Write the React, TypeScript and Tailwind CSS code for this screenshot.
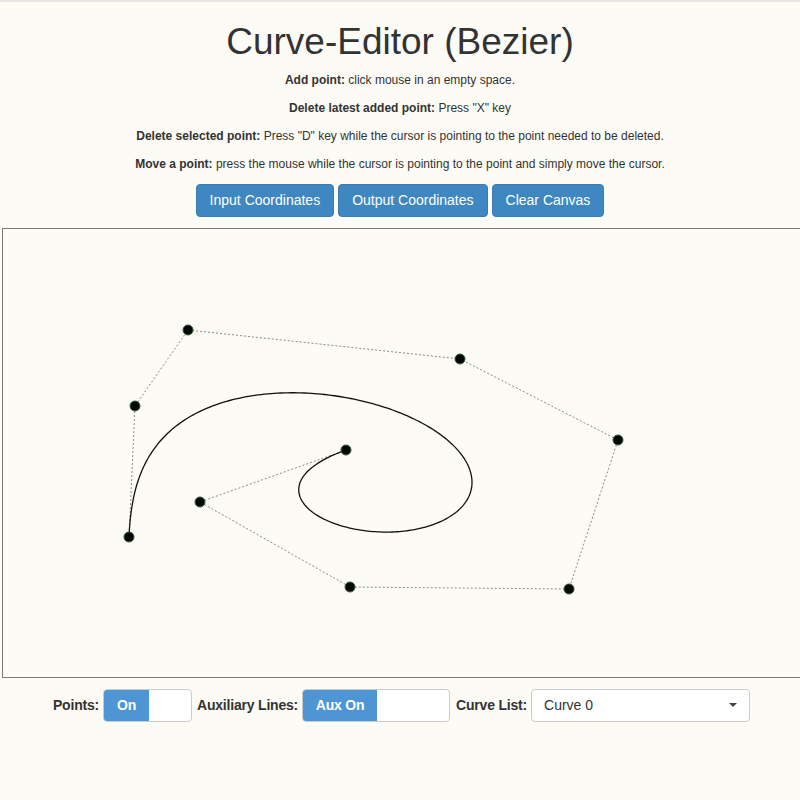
import React from "react";

type Pt = [number, number];

// control points, in page coordinates (the svg viewBox is offset to match)
const points: Pt[] = [
  [129, 537],
  [135, 406],
  [188, 330],
  [460, 359],
  [618, 440],
  [569, 589],
  [350, 587],
  [200, 502],
  [346, 450],
];

const bezierAt = (pts: Pt[], t: number): Pt => {
  let cur = pts.map((p) => [...p] as Pt);
  while (cur.length > 1) {
    const next: Pt[] = [];
    for (let i = 0; i < cur.length - 1; i++) {
      next.push([
        cur[i][0] + (cur[i + 1][0] - cur[i][0]) * t,
        cur[i][1] + (cur[i + 1][1] - cur[i][1]) * t,
      ]);
    }
    cur = next;
  }
  return cur[0];
};

const curvePath = () => {
  const steps = 300;
  let d = "";
  for (let i = 0; i <= steps; i++) {
    const [x, y] = bezierAt(points, i / steps);
    d += `${i === 0 ? "M" : "L"}${x.toFixed(2)} ${y.toFixed(2)} `;
  }
  return d;
};

const help = [
  { label: "Add point:", text: "click mouse in an empty space." },
  { label: "Delete latest added point:", text: 'Press "X" key' },
  {
    label: "Delete selected point:",
    text: 'Press "D" key while the cursor is pointing to the point needed to be deleted.',
  },
  {
    label: "Move a point:",
    text: "press the mouse while the cursor is pointing to the point and simply move the cursor.",
  },
];

const Toggle = ({ label, width, onWidth }: { label: string; width: string; onWidth: string }) => (
  <div className={`flex h-[33px] ${width} overflow-hidden rounded-[4px] border border-[#ccc] bg-white`}>
    <div className={`flex ${onWidth} items-center justify-center bg-[#4e96d3] text-[14px] font-bold text-white`}>
      {label}
    </div>
  </div>
);

const App = () => {
  return (
    <div
      className="min-h-[800px] w-[800px] overflow-hidden border-t-2 border-[#e6e6e6] bg-[#fcfbf5] text-[#333]"
      style={{ fontFamily: '"Liberation Sans", Arial, sans-serif' }}
    >
      {/* Header */}
      <div className="flex flex-col items-center">
        <h1 className="mt-5 mb-[9px] text-[37px] leading-[40px] font-medium">Curve-Editor (Bezier)</h1>
        {help.map((h) => (
          <p key={h.label} className="mb-[10px] text-[12px] leading-[18px]">
            <b>{h.label}</b> {h.text}
          </p>
        ))}
        <div className="mt-[1px] flex gap-1">
          <button className="h-[33px] rounded-[4px] border border-[#3a7db5] bg-[#3f87c1] px-[13px] text-[14px] text-white">
            Input Coordinates
          </button>
          <button className="h-[33px] rounded-[4px] border border-[#3a7db5] bg-[#3f87c1] px-[13px] text-[14px] text-white">
            Output Coordinates
          </button>
          <button className="h-[33px] rounded-[4px] border border-[#3a7db5] bg-[#3f87c1] px-[13px] text-[14px] text-white">
            Clear Canvas
          </button>
        </div>
      </div>

      {/* Canvas */}
      <div className="mt-[11px] ml-[2px] h-[450px] w-[830px] border border-[#7a7a72]">
        <svg width="828" height="448" viewBox="3 229 828 448" className="block">
          <polyline
            points={points.map((p) => p.join(",")).join(" ")}
            fill="none"
            stroke="#8a8a8a"
            strokeWidth="1"
            strokeDasharray="2 2"
          />
          <path d={curvePath()} fill="none" stroke="#111" strokeWidth="1.3" />
          {points.map(([x, y]) => (
            <circle key={`${x}-${y}`} cx={x} cy={y} r="5" fill="#050505" stroke="#2f5f2f" strokeWidth="1" />
          ))}
        </svg>
      </div>

      {/* Controls */}
      <div className="mt-[10px] flex h-[34px] items-center justify-center pl-[3px] text-[14px] tracking-[-0.2px]">
        <span className="font-bold">Points:</span>
        <div className="ml-1">
          <Toggle label="On" width="w-[89px]" onWidth="w-[45px]" />
        </div>
        <span className="ml-[5px] font-bold">Auxiliary Lines:</span>
        <div className="ml-1">
          <Toggle label="Aux On" width="w-[148px]" onWidth="w-[74px]" />
        </div>
        <span className="ml-[6px] font-bold">Curve List:</span>
        <div className="ml-1 flex h-[33px] w-[219px] items-center justify-between rounded-[4px] border border-[#ccc] bg-white px-[12px] tracking-normal">
          <span>Curve 0</span>
          <svg width="8" height="4" viewBox="0 0 8 4">
            <path d="M0 0 L8 0 L4 4 Z" fill="#444" />
          </svg>
        </div>
      </div>
    </div>
  );
};

export default App;
